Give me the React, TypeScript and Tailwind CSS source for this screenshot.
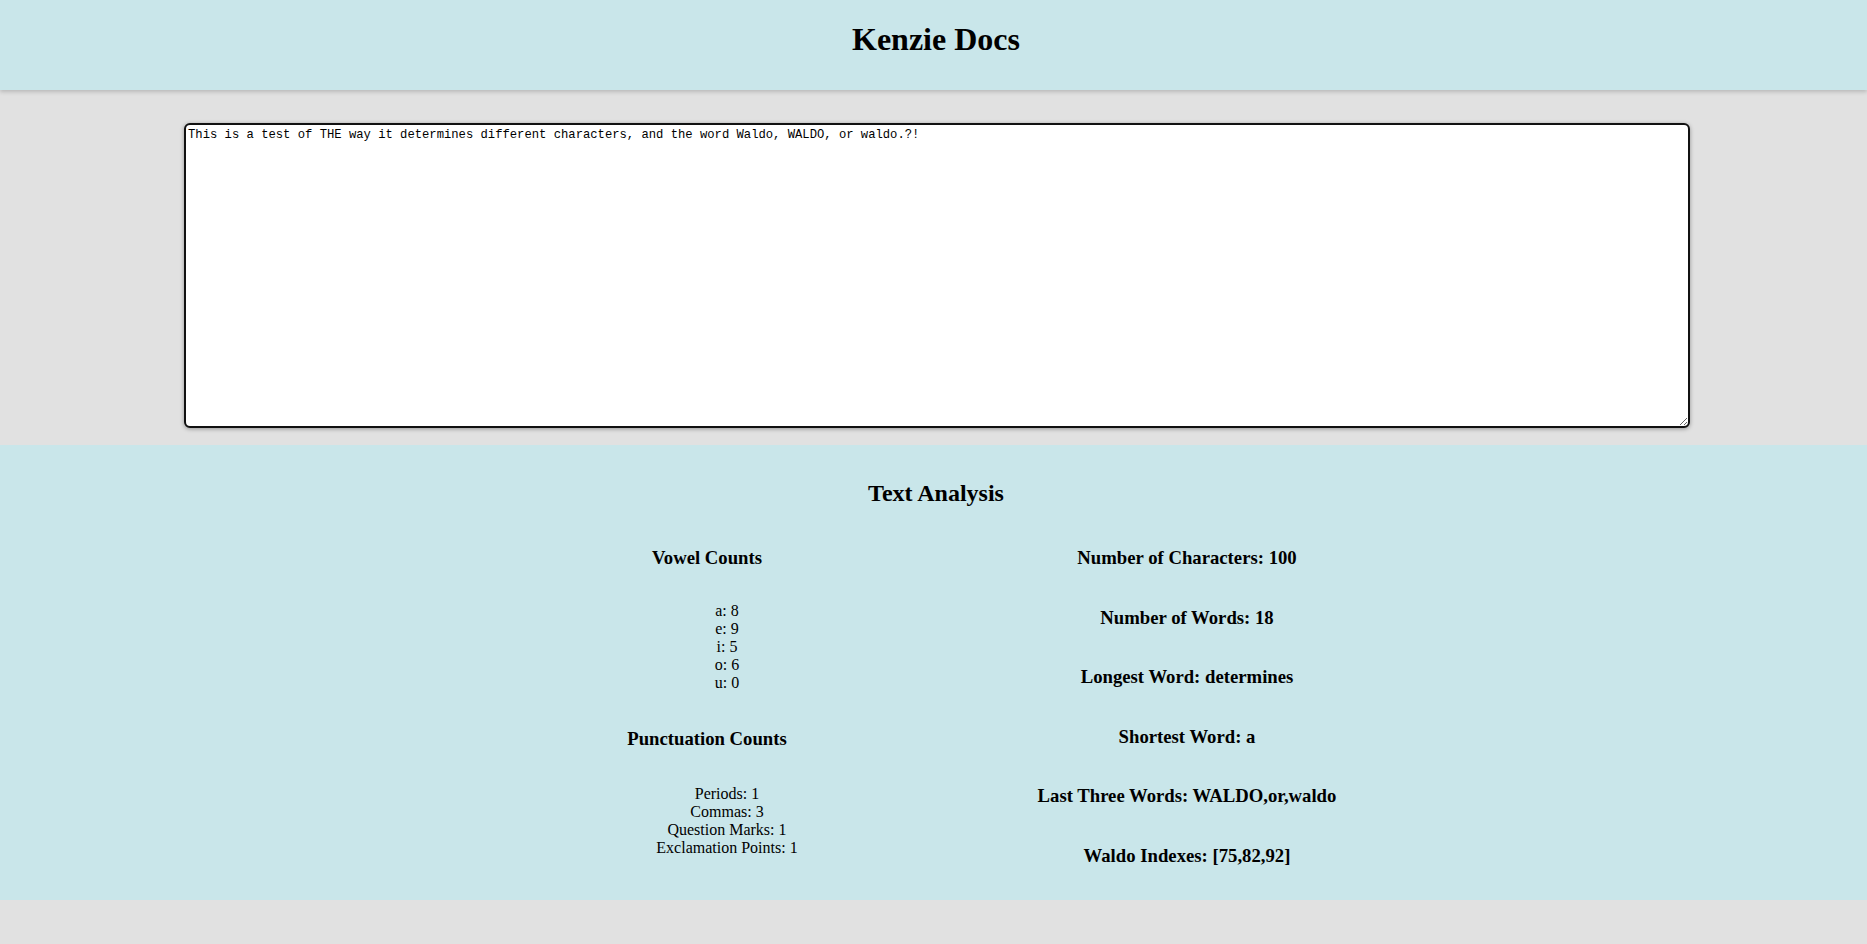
import React from "react";

export default function App() {
  const serif = { fontFamily: '"Liberation Serif", "Times New Roman", serif' };
  const text =
    "This is a test of THE way it determines different characters, and the word Waldo, WALDO, or waldo.?!";
  return (
    <div className="min-h-[944px] bg-[#e1e1e1] text-black" style={serif}>
      <header className="relative z-10 h-[90px] bg-[#c9e6ea] pl-[5px] pt-[22px] shadow-[0_2px_4px_rgba(0,0,0,0.18)]">
        <h1 className="text-center text-[32px] font-bold leading-[35px]">Kenzie Docs</h1>
      </header>
      <div className="h-[355px] pt-[33px]">
        <textarea
          defaultValue={text}
          spellCheck={false}
          className="ml-[184px] block h-[305px] w-[1506px] rounded-[6px] border-2 border-[#111] bg-white px-[2px] pb-[2px] pt-[3px] text-[12.2px] leading-[14px] text-black shadow-[0_1px_4px_rgba(0,0,0,0.35)] outline-none"
          style={{ fontFamily: '"Liberation Mono", "DejaVu Sans Mono", monospace' }}
        />
      </div>
      <section className="h-[455px] bg-[#c9e6ea] pt-[35px]">
        <h2 className="pl-[5px] text-center text-[24px] font-bold leading-[27px]">Text Analysis</h2>
        <div className="mt-[40px] flex">
          <div className="ml-[557px] flex w-[300px] flex-col items-center">
            <h3 className="text-[18.72px] font-bold leading-[21px]">Vowel Counts</h3>
            <ul className="mt-[33.5px] pl-[40px] text-center text-[16px] leading-[18px]">
              <li>a: 8</li>
              <li>e: 9</li>
              <li>i: 5</li>
              <li>o: 6</li>
              <li>u: 0</li>
            </ul>
            <h3 className="mt-[36.5px] text-[18.72px] font-bold leading-[21px]">Punctuation Counts</h3>
            <ul className="mt-[35.5px] pl-[40px] text-center text-[16px] leading-[18px]">
              <li>Periods: 1</li>
              <li>Commas: 3</li>
              <li>Question Marks: 1</li>
              <li>Exclamation Points: 1</li>
            </ul>
          </div>
          <div className="ml-[130px] flex w-[400px] flex-col items-center gap-[38.5px]">
            <h3 className="text-[18.72px] font-bold leading-[21px]">Number of Characters: 100</h3>
            <h3 className="text-[18.72px] font-bold leading-[21px]">Number of Words: 18</h3>
            <h3 className="text-[18.72px] font-bold leading-[21px]">Longest Word: determines</h3>
            <h3 className="text-[18.72px] font-bold leading-[21px]">Shortest Word: a</h3>
            <h3 className="text-[18.72px] font-bold leading-[21px]">Last Three Words: WALDO,or,waldo</h3>
            <h3 className="text-[18.72px] font-bold leading-[21px]">Waldo Indexes: [75,82,92]</h3>
          </div>
        </div>
      </section>
    </div>
  );
}
